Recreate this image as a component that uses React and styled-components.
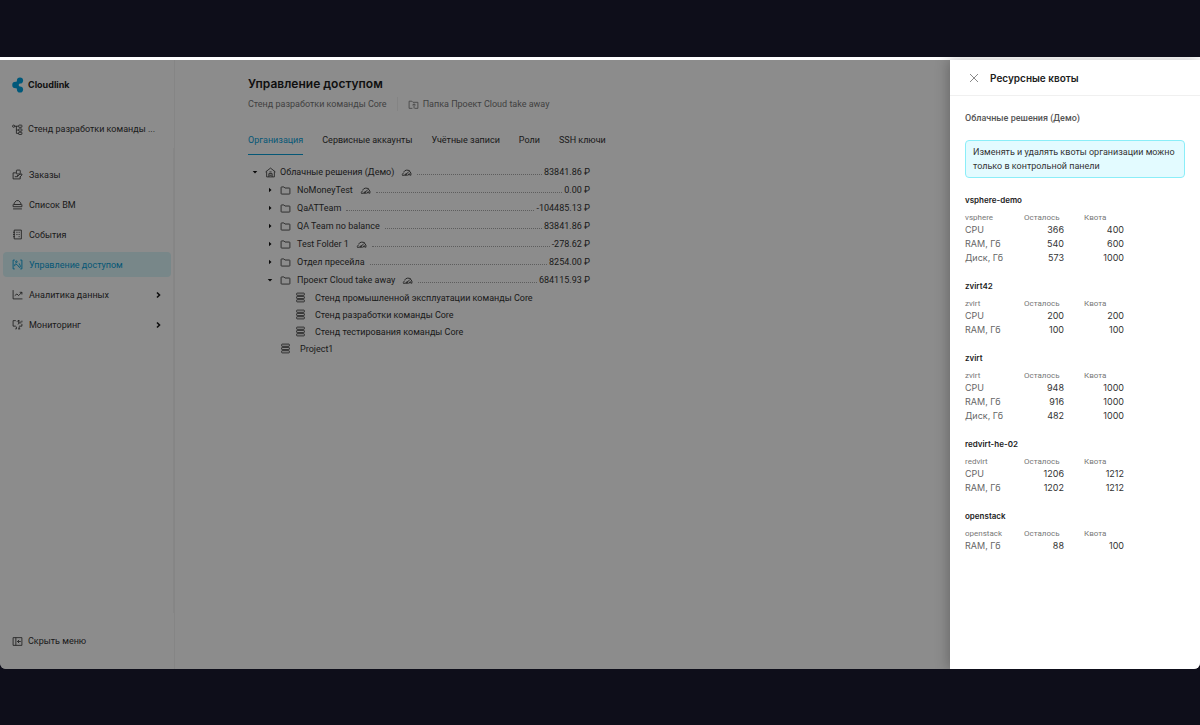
import React, { useState } from 'react';
import styled, { createGlobalStyle } from 'styled-components';

const palette = {
    page: '#0e0e1a',
    text: '#333',
    dark: '#1c1c1c',
    muted: '#777',
    line: '#f0f0f0',
    blue: '#0a9fd8',
    active: '#daf6f9',
};

const numbers = 'Inter, "Liberation Sans", sans-serif';

const GlobalStyle = createGlobalStyle`
    * {
        box-sizing: border-box;
    }

    body {
        margin: 0;
        background: ${ palette.page };
        color: ${ palette.text };
        font-family: Roboto, "Liberation Sans", sans-serif;
        font-size: 9px;
        line-height: 14px;
    }

    button {
        padding: 0;
        border: none;
        background: none;
        color: inherit;
        font: inherit;
        text-align: left;
        cursor: pointer;
    }

    a {
        color: inherit;
        text-decoration: none;
    }

    h1, h2, h3, p, ul {
        margin: 0;
        padding: 0;
    }

    ul {
        list-style: none;
    }
`;

const Page = styled.div`
    display: flex;
    min-height: 100vh;
    padding: 57px 0 56px;
`;

const Window = styled.div`
    display: flex;
    flex: 1;
    padding-top: 3px;
    border-radius: 0 0 6px 6px;
    background: #fff;
    overflow: hidden;
`;

const Screen = styled.div`
    position: relative;
    display: flex;
    flex: 1;
`;

const Overlay = styled.div`
    position: absolute;
    inset: 0;
    background: rgba(0, 0, 0, 0.45);
`;

const Sidebar = styled.aside`
    display: flex;
    flex-direction: column;
    width: 175px;
    border-right: 1px solid #f2f2f2;
`;

const Brand = styled.a`
    display: flex;
    align-items: center;
    gap: 4px;
    height: 50px;
    padding-left: 12px;
    color: ${ palette.dark };
    font-family: ${ numbers };
    font-size: 9px;
    font-weight: 700;
`;

const ProjectButton = styled.button`
    display: flex;
    align-items: center;
    gap: 5px;
    height: 38px;
    padding-left: 12px;
`;

const Nav = styled.nav`
    display: flex;
    flex: 1;
    flex-direction: column;
    gap: 5px;
    padding: 14px 2px 0 3px;
    border-right: 1px solid #f4f4f4;
`;

const NavItem = styled.a`
    display: flex;
    align-items: center;
    gap: 6px;
    height: 25px;
    padding: 0 10px 0 9px;
    border-radius: 4px;
    background: ${ ({ $active }) => $active ? palette.active : 'none' };
    color: ${ ({ $active }) => $active ? palette.blue : palette.text };
`;

const NavLabel = styled.span`
    flex: 1;
`;

const HideButton = styled.button`
    display: flex;
    align-items: center;
    gap: 5px;
    height: 56px;
    padding-left: 12px;
`;

const Content = styled.main`
    flex: 1;
    padding: 15px 20px 0 73px;
`;

const Title = styled.h1`
    color: ${ palette.dark };
    font-family: ${ numbers };
    font-size: 12px;
    font-weight: 600;
    line-height: 18px;
`;

const Crumbs = styled.div`
    display: flex;
    align-items: center;
    margin-top: 4px;
    color: ${ palette.muted };
`;

const Crumb = styled.span`
    display: flex;
    align-items: center;
    gap: 4px;

    & + & {
        margin-left: 10px;
        padding-left: 10px;
        border-left: 1px solid ${ palette.line };
    }
`;

const Tabs = styled.div`
    display: flex;
    gap: 19px;
    margin-top: 15px;
`;

const Tab = styled.button`
    height: 29px;
    border-bottom: 1px solid ${ ({ $active }) => $active ? palette.blue : 'transparent' };
    color: ${ ({ $active }) => $active ? palette.blue : palette.text };
`;

const Tree = styled.ul`
    max-width: 342px;
    margin-top: 8px;
`;

const TreeRow = styled.li`
    display: flex;
    align-items: center;
    height: ${ ({ $leaf }) => $leaf ? 17 : 18 }px;
    padding-left: ${ ({ $level }) => [2, 17, 32][$level] }px;
`;

const Toggle = styled.button`
    display: flex;
    align-items: center;
    justify-content: center;
    width: 10px;
    height: 10px;
    margin-right: 5px;
    visibility: ${ ({ $hidden }) => $hidden ? 'hidden' : 'visible' };
`;

const RowName = styled.span`
    margin-left: ${ ({ $gap }) => $gap }px;
    white-space: nowrap;
`;

const QuotaButton = styled.button`
    display: flex;
    margin-left: 7px;
`;

const Dots = styled.span`
    flex: 1;
    height: 6px;
    margin: 0 2px 0 5px;
    border-bottom: 1px dotted #aaa;
`;

const Drawer = styled.section`
    position: absolute;
    top: 0;
    right: 0;
    bottom: 0;
    width: 250px;
    background: #fff;
    box-shadow: -2px 0 12px rgba(0, 0, 0, 0.25);
`;

const DrawerHeader = styled.header`
    display: flex;
    align-items: center;
    gap: 10px;
    height: 36px;
    padding-left: 18px;
    border-bottom: 1px solid ${ palette.line };
`;

const CloseButton = styled.button`
    display: flex;
    width: 12px;
    height: 12px;
    color: #8a8a8a;
`;

const DrawerTitle = styled.h2`
    color: ${ palette.dark };
    font-family: ${ numbers };
    font-size: 10px;
    font-weight: 600;
`;

const DrawerBody = styled.div`
    padding: 15px;
`;

const Owner = styled.p`
    color: #555;
    font-weight: 500;
`;

const Notice = styled.p`
    margin: 15px 0 15px;
    padding: 4px 7px;
    border: 1px solid #8beef8;
    border-radius: 4px;
    background: #e3fbff;
`;

const Group = styled.section`
    margin-bottom: 14px;
`;

const GroupTitle = styled.h3`
    margin-bottom: 5px;
    color: ${ palette.dark };
    font-family: ${ numbers };
    font-size: 8px;
    font-weight: 600;
    line-height: 14px;
`;

const QuotaTable = styled.table`
    width: 159px;
    border-collapse: collapse;
    table-layout: fixed;

    th {
        height: 11px;
        padding: 0;
        color: ${ palette.muted };
        font-size: 8px;
        font-weight: 400;
        line-height: 11px;
        text-align: left;
    }

    tbody th {
        height: 14px;
        color: #666;
        font-family: ${ numbers };
        font-size: 9px;
        line-height: 14px;
    }

    th:first-child {
        width: 59px;
    }

    thead th:last-child {
        padding-left: 20px;
    }

    td {
        padding: 0;
        font-family: ${ numbers };
        text-align: right;
    }

    thead th:nth-child(2) {
        width: 40px;
    }
`;

const Icon = ({ size = 11, width = 1.7, children }) => (
    <svg width={ size }
         height={ size }
         viewBox="0 0 20 20"
         fill="none"
         stroke="currentColor"
         strokeWidth={ width }
         strokeLinejoin="round"
         aria-hidden="true"
    >
        { children }
    </svg>
);

const Logo = () => (
    <svg width="12" height="16" viewBox="0 0 24 32" fill="#00a0de" aria-hidden="true">
        <path d="M7 16 16 7M7 16 16 25" stroke="#00a0de" strokeWidth="7" />
        <circle cx="7" cy="16" r="6.500" />
        <circle cx="16" cy="7" r="6.200" />
        <circle cx="16" cy="25" r="6.200" />
    </svg>
);

const ProjectIcon = () => (
    <Icon width={ 1.5 }>
        <path d="M5 4h6M8 4v13h4M8 11h4" />
        <circle cx="3" cy="4" r="2" />
        <rect x="12" y="2" width="6" height="4" rx="1" />
        <rect x="12" y="9" width="6" height="4" rx="1" />
        <rect x="12" y="15" width="6" height="4" rx="1" />
    </Icon>
);

const OrdersIcon = () => (
    <Icon width={ 1.5 }>
        <path d="M7 7H2v11h13v-4M5 14h5v-3" />
        <rect x="8" y="2" width="7" height="7" rx="1" />
        <path d="M11 13l2-3 5-1v2l-4 4" />
    </Icon>
);

const ServersIcon = () => (
    <Icon width={ 1.5 }>
        <path d="M3 10 5 6l3-3h4l3 3 2 4zM2 10v4h16v-4M2 18h16" />
    </Icon>
);

const EventsIcon = () => (
    <Icon width={ 1.5 }>
        <path d="M4 2h13v16H4zM2 6h3M2 10h3M2 14h3M8 6h2M12 6h2M8 10h2M12 10h2M12 14h2" />
    </Icon>
);

const AccessIcon = () => (
    <Icon>
        <path d="M5 2H2v16h3M15 2h3v16h-3M5 13v-3l2-1 3 2 4 5M13 8l2 4v3" />
        <circle cx="8" cy="5" r="1.500" />
    </Icon>
);

const ChartIcon = () => (
    <Icon width={ 1.5 }>
        <path d="M2 2v16h17M5 12l4-3 3 3 6-6M14 6h4v4" />
    </Icon>
);

const MonitorIcon = () => (
    <Icon width={ 1.5 }>
        <path d="M7 3H2v10h5M13 13h5V9M6 18h2v-4M11 18h4M13 14v4M11 10l2-3M12 2v5h5M9 5l3-3 3 3M18 3v3" />
    </Icon>
);

const HideIcon = () => (
    <Icon width={ 1.5 }>
        <path d="M2 3h16v14H2zM7 3v14M16 10h-6M13 7l-3 3 3 3" />
    </Icon>
);

const ChevronIcon = () => (
    <svg width="5" height="8" viewBox="0 0 5 8" fill="none" stroke="#1c1c1c" strokeWidth="1.600" aria-hidden="true">
        <path d="M1 1.500 3.500 4 1 6.500" />
    </svg>
);

const FolderIcon = () => (
    <Icon width={ 1.5 }>
        <path d="M2 4.500q0-1 1-1h4l2 2h8q1 0 1 1v9q0 1-1 1H3q-1 0-1-1z" />
    </Icon>
);

const FolderUpIcon = () => (
    <Icon width={ 1.5 }>
        <path d="M12 17h6V6H9L7 4H2v13h6M11 17V9M8 11l3-2 3 2" />
    </Icon>
);

const HomeIcon = () => (
    <Icon width={ 1.5 }>
        <path d="M1 9l9-7 9 7M3 8v10h14V8M7 18v-6h6v6M8 9h4M8 15h4" />
    </Icon>
);

const StackIcon = () => (
    <Icon width={ 1.5 }>
        <rect x="3" y="2" width="14" height="4" rx="1" />
        <rect x="3" y="8" width="14" height="4" rx="1" />
        <rect x="3" y="14" width="14" height="4" rx="1" />
    </Icon>
);

const GaugeIcon = () => (
    <Icon width={ 1.6 }>
        <path d="M5 9c2-4 7-4 11-2M2 14l3-4M2 15h5M8 14l6-5M15 7l3 4v4M12 16l3-4 2 4" />
        <circle cx="9" cy="14" r="1.500" />
    </Icon>
);

const Caret = ({ open }) => (
    <svg width="6" height="6" viewBox="0 0 6 6" fill="#111" aria-hidden="true">
        <path d={ open ? 'M0.700 2h4.600L3 4.500z' : 'M2 0.700v4.600L4.500 3z' } />
    </svg>
);

const CloseIcon = () => (
    <svg width="12" height="12" viewBox="0 0 12 12" fill="none" stroke="currentColor" aria-hidden="true">
        <path d="M2 2l8 8M10 2l-8 8" />
    </svg>
);

const menu = [
    { label: 'Заказы', icon: OrdersIcon },
    { label: 'Список ВМ', icon: ServersIcon },
    { label: 'События', icon: EventsIcon },
    { label: 'Управление доступом', icon: AccessIcon, active: true },
    { label: 'Аналитика данных', icon: ChartIcon, nested: true },
    { label: 'Мониторинг', icon: MonitorIcon, nested: true },
];

const tabs = ['Организация', 'Сервисные аккаунты', 'Учётные записи', 'Роли', 'SSH ключи'];

const rows = [
    { name: 'Облачные решения (Демо)', level: 0, icon: HomeIcon, sum: '83841.86', quota: true, open: true },
    { name: 'NoMoneyTest', level: 1, icon: FolderIcon, sum: '0.00', quota: true },
    { name: 'QaATTeam', level: 1, icon: FolderIcon, sum: '-104485.13' },
    { name: 'QA Team no balance', level: 1, icon: FolderIcon, sum: '83841.86' },
    { name: 'Test Folder 1', level: 1, icon: FolderIcon, sum: '-278.62', quota: true },
    { name: 'Отдел пресейла', level: 1, icon: FolderIcon, sum: '8254.00' },
    { name: 'Проект Cloud take away', level: 1, icon: FolderIcon, sum: '684115.93', quota: true, open: true },
    { name: 'Стенд промышленной эксплуатации команды Core', level: 2, icon: StackIcon },
    { name: 'Стенд разработки команды Core', level: 2, icon: StackIcon },
    { name: 'Стенд тестирования команды Core', level: 2, icon: StackIcon },
    { name: 'Project1', level: 1, icon: StackIcon },
];

const nameGap = ({ level, sum }) => {
    if (!sum) {
        return 9;
    }
    return level ? 6 : 4;
};

const quotas = [
    { name: 'vsphere-demo', type: 'vsphere', items: [['CPU', 366, 400], ['RAM, Гб', 540, 600], ['Диск, Гб', 573, 1000]] },
    { name: 'zvirt42', type: 'zvirt', items: [['CPU', 200, 200], ['RAM, Гб', 100, 100]] },
    { name: 'zvirt', type: 'zvirt', items: [['CPU', 948, 1000], ['RAM, Гб', 916, 1000], ['Диск, Гб', 482, 1000]] },
    { name: 'redvirt-he-02', type: 'redvirt', items: [['CPU', 1206, 1212], ['RAM, Гб', 1202, 1212]] },
    { name: 'openstack', type: 'openstack', items: [['RAM, Гб', 88, 100]] },
];

const QuotaGroup = ({ name, type, items }) => (
    <Group>
        <GroupTitle>{ name }</GroupTitle>
        <QuotaTable>
            <thead>
                <tr>
                    <th scope="col">{ type }</th>
                    <th scope="col">Осталось</th>
                    <th scope="col">Квота</th>
                </tr>
            </thead>
            <tbody>
                { items.map(([label, left, total]) => (
                    <tr key={ label }>
                        <th scope="row">{ label }</th>
                        <td>{ left }</td>
                        <td>{ total }</td>
                    </tr>
                )) }
            </tbody>
        </QuotaTable>
    </Group>
);

const App = () => {
    const [tab, setTab] = useState(tabs[0]);
    const [drawer, setDrawer] = useState(true);

    return (
        <Page>
            <GlobalStyle />
            <Window>
                <Screen>
                    <Sidebar>
                        <Brand href="#">
                            <Logo />
                            Cloudlink
                        </Brand>
                        <ProjectButton>
                            <ProjectIcon />
                            Стенд разработки команды ...
                        </ProjectButton>
                        <Nav>
                            { menu.map(({ label, icon: ItemIcon, active, nested }) => (
                                <NavItem key={ label } href="#" $active={ active }>
                                    <ItemIcon />
                                    <NavLabel>{ label }</NavLabel>
                                    { nested && <ChevronIcon /> }
                                </NavItem>
                            )) }
                        </Nav>
                        <HideButton>
                            <HideIcon />
                            Скрыть меню
                        </HideButton>
                    </Sidebar>
                    <Content>
                        <Title>Управление доступом</Title>
                        <Crumbs>
                            <Crumb>Стенд разработки команды Core</Crumb>
                            <Crumb>
                                <FolderUpIcon />
                                Папка Проект Cloud take away
                            </Crumb>
                        </Crumbs>
                        <Tabs role="tablist">
                            { tabs.map(name => (
                                <Tab key={ name }
                                     role="tab"
                                     aria-selected={ name === tab }
                                     $active={ name === tab }
                                     onClick={ () => setTab(name) }
                                >
                                    { name }
                                </Tab>
                            )) }
                        </Tabs>
                        <Tree>
                            { rows.map(({ name, level, icon: RowIcon, sum, quota, open }) => (
                                <TreeRow key={ name } $level={ level } $leaf={ !sum }>
                                    <Toggle aria-label="Развернуть" $hidden={ !sum }>
                                        <Caret open={ open } />
                                    </Toggle>
                                    <RowIcon />
                                    <RowName $gap={ nameGap({ level, sum }) }>{ name }</RowName>
                                    { quota && (
                                        <QuotaButton aria-label="Квоты" onClick={ () => setDrawer(true) }>
                                            <GaugeIcon />
                                        </QuotaButton>
                                    ) }
                                    { sum && <Dots /> }
                                    { sum && <span>{ sum } ₽</span> }
                                </TreeRow>
                            )) }
                        </Tree>
                    </Content>
                    { drawer && <Overlay onClick={ () => setDrawer(false) } /> }
                    { drawer && (
                        <Drawer role="dialog" aria-labelledby="drawer-title">
                            <DrawerHeader>
                                <CloseButton aria-label="Закрыть" onClick={ () => setDrawer(false) }>
                                    <CloseIcon />
                                </CloseButton>
                                <DrawerTitle id="drawer-title">Ресурсные квоты</DrawerTitle>
                            </DrawerHeader>
                            <DrawerBody>
                                <Owner>Облачные решения (Демо)</Owner>
                                <Notice>Изменять и удалять квоты организации можно только в контрольной панели</Notice>
                                { quotas.map(group => (
                                    <QuotaGroup key={ group.name } { ...group } />
                                )) }
                            </DrawerBody>
                        </Drawer>
                    ) }
                </Screen>
            </Window>
        </Page>
    );
};

export default App;
